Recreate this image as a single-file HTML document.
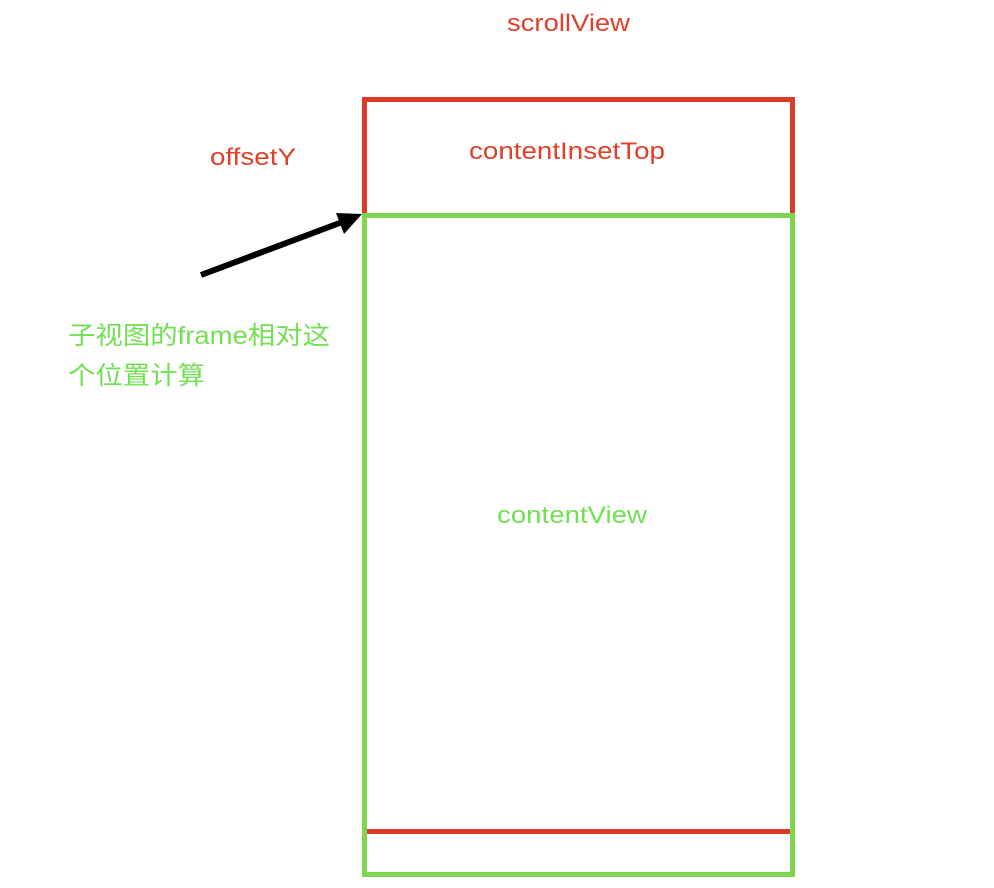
<!DOCTYPE html>
<html><head><meta charset="utf-8"><style>
html,body{margin:0;padding:0;background:#fff;width:994px;height:888px;overflow:hidden}
svg text{font-family:"Liberation Sans","Noto Sans CJK SC",sans-serif}
</style></head><body>
<svg width="994" height="888" viewBox="0 0 994 888" xmlns="http://www.w3.org/2000/svg">
<rect x="364.5" y="99.5" width="428" height="116" fill="none" stroke="#db3a27" stroke-width="5"/>
<rect x="364.5" y="215.5" width="428" height="659" fill="none" stroke="#7ed550" stroke-width="5"/>
<line x1="367" y1="831.5" x2="790" y2="831.5" stroke="#db3a27" stroke-width="5"/>
<line x1="201" y1="275" x2="345" y2="221" stroke="#000" stroke-width="6"/>
<polygon points="362,214 336,213 344,234" fill="#000"/>
<text x="507" y="31" font-size="24" fill="#e0402a" textLength="123" lengthAdjust="spacingAndGlyphs">scrollView</text>
<text x="210" y="165" font-size="24" fill="#e0402a" textLength="86" lengthAdjust="spacingAndGlyphs">offsetY</text>
<text x="469" y="159" font-size="24" fill="#e0402a" textLength="196" lengthAdjust="spacingAndGlyphs">contentInsetTop</text>
<text x="497" y="523" font-size="24" fill="#72e052" textLength="150" lengthAdjust="spacingAndGlyphs">contentView</text>
<text x="68" y="344" font-size="25" fill="#72e052" textLength="262" lengthAdjust="spacingAndGlyphs">子视图的frame相对这</text>
<text x="68" y="384" font-size="25" fill="#72e052" textLength="137" lengthAdjust="spacingAndGlyphs">个位置计算</text>
</svg>
</body></html>
